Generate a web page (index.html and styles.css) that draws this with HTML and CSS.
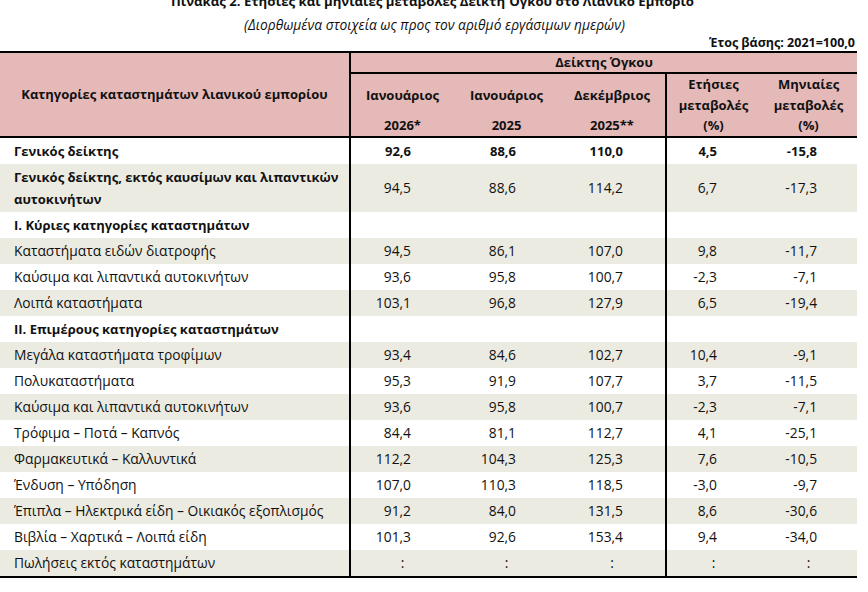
FILE: index.html
```html
<!DOCTYPE html>
<html lang="el">
<head>
<meta charset="utf-8">
<link rel="stylesheet" href="styles.css">
</head>
<body>
<div class="page">
  <div class="title">Πίνακας 2. Ετήσιες και μηνιαίες μεταβολές Δείκτη Όγκου στο Λιανικό Εμπόριο</div>
  <div class="subtitle">(Διορθωμένα στοιχεία ως προς τον αριθμό εργάσιμων ημερών)</div>
  <div class="base">Έτος βάσης: 2021=100,0</div>
  <table class="tbl">
    <colgroup>
      <col class="c1"><col class="c2"><col class="c3"><col class="c4"><col class="c5"><col class="c6">
    </colgroup>
    <thead>
      <tr class="h1">
        <th rowspan="2" class="cat">Κατηγορίες καταστημάτων λιανικού εμπορίου</th>
        <th colspan="5" class="idx">Δείκτης Όγκου</th>
      </tr>
      <tr class="h2">
        <th class="sub"><div class="top">Ιανουάριος</div><div class="bot">2026*</div></th>
        <th class="sub"><div class="top">Ιανουάριος</div><div class="bot">2025</div></th>
        <th class="sub"><div class="top">Δεκέμβριος</div><div class="bot">2025**</div></th>
        <th class="sub sep"><div>Ετήσιες</div><div>μεταβολές</div><div>(%)</div></th>
        <th class="sub"><div>Μηνιαίες</div><div>μεταβολές</div><div>(%)</div></th>
      </tr>
    </thead>
    <tbody>
      <tr class="b"><td>Γενικός δείκτης</td><td>92,6</td><td>88,6</td><td>110,0</td><td class="sep">4,5</td><td>-15,8</td></tr>
      <tr class="alt tall"><td class="bl">Γενικός δείκτης, εκτός καυσίμων και λιπαντικών αυτοκινήτων</td><td>94,5</td><td>88,6</td><td>114,2</td><td class="sep">6,7</td><td>-17,3</td></tr>
      <tr class="b"><td>Ι. Κύριες κατηγορίες καταστημάτων</td><td></td><td></td><td></td><td class="sep"></td><td></td></tr>
      <tr class="alt"><td>Καταστήματα ειδών διατροφής</td><td>94,5</td><td>86,1</td><td>107,0</td><td class="sep">9,8</td><td>-11,7</td></tr>
      <tr><td>Καύσιμα και λιπαντικά αυτοκινήτων</td><td>93,6</td><td>95,8</td><td>100,7</td><td class="sep">-2,3</td><td>-7,1</td></tr>
      <tr class="alt"><td>Λοιπά καταστήματα</td><td>103,1</td><td>96,8</td><td>127,9</td><td class="sep">6,5</td><td>-19,4</td></tr>
      <tr class="b"><td>ΙΙ. Επιμέρους κατηγορίες καταστημάτων</td><td></td><td></td><td></td><td class="sep"></td><td></td></tr>
      <tr class="alt"><td>Μεγάλα καταστήματα τροφίμων</td><td>93,4</td><td>84,6</td><td>102,7</td><td class="sep">10,4</td><td>-9,1</td></tr>
      <tr><td>Πολυκαταστήματα</td><td>95,3</td><td>91,9</td><td>107,7</td><td class="sep">3,7</td><td>-11,5</td></tr>
      <tr class="alt"><td>Καύσιμα και λιπαντικά αυτοκινήτων</td><td>93,6</td><td>95,8</td><td>100,7</td><td class="sep">-2,3</td><td>-7,1</td></tr>
      <tr><td>Τρόφιμα – Ποτά – Καπνός</td><td>84,4</td><td>81,1</td><td>112,7</td><td class="sep">4,1</td><td>-25,1</td></tr>
      <tr class="alt"><td>Φαρμακευτικά – Καλλυντικά</td><td>112,2</td><td>104,3</td><td>125,3</td><td class="sep">7,6</td><td>-10,5</td></tr>
      <tr><td>Ένδυση – Υπόδηση</td><td>107,0</td><td>110,3</td><td>118,5</td><td class="sep">-3,0</td><td>-9,7</td></tr>
      <tr class="alt"><td>Έπιπλα – Ηλεκτρικά είδη – Οικιακός εξοπλισμός</td><td>91,2</td><td>84,0</td><td>131,5</td><td class="sep">8,6</td><td>-30,6</td></tr>
      <tr><td>Βιβλία – Χαρτικά – Λοιπά είδη</td><td>101,3</td><td>92,6</td><td>153,4</td><td class="sep">9,4</td><td>-34,0</td></tr>
      <tr class="alt last"><td>Πωλήσεις εκτός καταστημάτων</td><td class="na">:</td><td class="na">:</td><td class="na">:</td><td class="sep na">:</td><td class="na">:</td></tr>
    </tbody>
  </table>
</div>
</body>
</html>
```
FILE: styles.css
```css
html, body {
  margin: 0;
  padding: 0;
  background: #ffffff;
}
body {
  font-family: "Open Sans", "Noto Sans", "DejaVu Sans", sans-serif;
  font-size: 13.8px;
  color: #111111;
}
.page {
  width: 857px;
  margin-top: -9px;
}
.title {
  text-align: center;
  font-weight: bold;
  font-size: 13.2px;
  line-height: 20px;
  padding-left: 8px;
}
.subtitle {
  text-align: center;
  font-style: italic;
  font-size: 13.8px;
  line-height: 20px;
  margin-top: 4px;
  padding-left: 12px;
}
.base {
  text-align: right;
  font-weight: bold;
  font-size: 12.5px;
  line-height: 20px;
  padding-right: 2px;
  margin-top: -2px;
}
.tbl {
  width: 857px;
  border-collapse: collapse;
  table-layout: fixed;
  margin-top: -2px;
}
.c1 { width: 350px; }
.c2 { width: 104px; }
.c3 { width: 105px; }
.c4 { width: 107px; }
.c5 { width: 94px; }
.c6 { width: 97px; }
thead th {
  background: #e5b9b8;
  font-weight: bold;
  font-size: 13px;
  padding: 0;
}
.h1 th {
  border-top: 2px solid #000;
}
.h1 .idx {
  height: 19px;
  line-height: 19px;
  border-bottom: 2px solid #000;
  border-left: 2px solid #000;
}
.cat {
  border-bottom: 2px solid #000;
  text-align: center;
}
.h2 th {
  border-bottom: 2px solid #000;
  height: 60px;
  line-height: 20.5px;
  vertical-align: top;
  padding-top: 0;
}
.h2 th:first-child {
  border-left: 2px solid #000;
}
.sub .top {
  margin-top: 11px;
}
.sub .bot {
  margin-top: 9px;
}
.h2 .sep {
  border-left: 2px solid #000;
}
tbody td {
  height: 26px;
  padding: 0;
  text-align: right;
  line-height: 18px;
  vertical-align: middle;
}
tbody td:first-child {
  text-align: left;
  padding-left: 14px;
  border-right: 2px solid #000;
}
tbody td:nth-child(2) { padding-right: 43px; }
tbody td:nth-child(3) { padding-right: 43px; }
tbody td:nth-child(4) { padding-right: 42px; }
tbody td:nth-child(5) { padding-right: 43px; }
tbody td:nth-child(6) { padding-right: 40px; }
tbody td.sep {
  border-left: 2px solid #000;
}
tbody td.na {
  text-align: center;
  padding-right: 0;
}
tbody tr.alt td {
  background: #ecebe2;
}
tbody tr.tall td {
  height: 48px;
}
tbody tr.tall td.bl {
  font-weight: bold;
  font-size: 13px;
  line-height: 22px;
  padding-right: 4px;
}
tbody tr.b td {
  font-weight: bold;
  font-size: 13px;
}
tbody tr.last td {
  border-bottom: 2px solid #000;
}
```
